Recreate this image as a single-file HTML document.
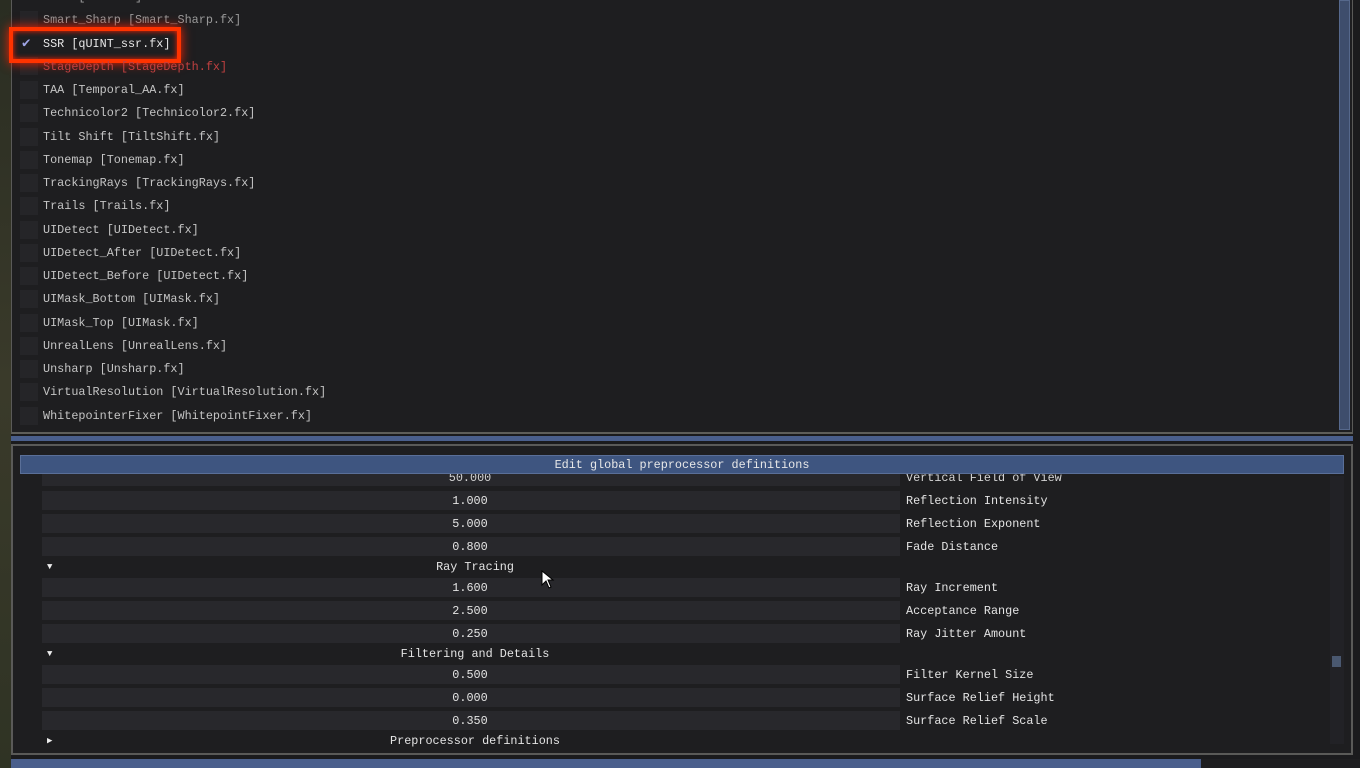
<!DOCTYPE html>
<html><head><meta charset="utf-8"><style>
*{margin:0;padding:0;box-sizing:border-box}
body{width:1360px;height:768px;background:#1b1b1d;position:relative;overflow:hidden;font-family:"Liberation Mono",monospace;font-size:11.8px;color:#d4d4d4}
div{position:absolute}
.t{white-space:pre;line-height:14px}
.cb{left:20px;width:18px;height:18px;background:#252528}
.row{left:42px;width:858px;height:19px;background:#28282c}
.lab{left:906px}
.val{left:300px;width:340px;text-align:center}
</style></head><body>
<div style="left:0;top:0;width:11px;height:768px;background:linear-gradient(#2a2d22,#3a3a2a 50%,#2f3324)"></div>
<div style="left:11px;top:0;width:1342px;height:434px;background:#1e1e20;border-left:1px solid #5a5a58;border-right:1px solid #5a5a58;border-bottom:2px solid #5e5e5a"></div>
<div style="left:1339px;top:0;width:11px;height:430px;background:#3e4d6c;border:1px solid #56688c"></div>
<div style="left:11px;top:436px;width:1342px;height:5px;background:#4a5f8c"></div>
<div class="cb" style="top:11px"></div><div class="t" style="left:43px;top:13px;color:#9a9a9a">Smart_Sharp [Smart_Sharp.fx]</div>
<div class="t" style="left:43px;top:-10px;color:#9a9a9a">Sett [Sett.fx]</div>
<div id="list"></div>
<div style="left:9px;top:27px;width:172px;height:36px;border:4px solid #ff3300;box-shadow:0 0 10px #ff2200,inset 0 0 6px #ff2200"></div>
<div class="t" style="left:22px;top:37px;color:#a0a6e6;font-size:14px">✔</div>
<div class="t" style="left:43px;top:37px;color:#e8e8e8">SSR [qUINT_ssr.fx]</div>
<div class="t" style="left:43px;top:60px;color:#c04040">StageDepth [StageDepth.fx]</div>
<div style="left:11px;top:444px;width:1342px;height:311px;background:#1e1e20;border:2px solid #5a5a58"></div>
<div style="left:1330px;top:476px;width:14px;height:268px;background:#222226"></div>
<div style="left:1332px;top:656px;width:9px;height:11px;background:#4a5870"></div>
<div class="row" style="top:469px;height:17px"></div><div class="t val" style="top:471px">50.000</div><div class="t lab" style="top:471px">Vertical Field of View</div>
<div id="rows"></div>
<div style="left:20px;top:446px;width:1324px;height:9px;background:#1e1e20"></div>
<div style="left:20px;top:455px;width:1324px;height:19px;background:#3e5580;border:1px solid #5a6f98"></div>
<div class="t" style="left:20px;top:458px;width:1324px;text-align:center;color:#e8e8e8">Edit global preprocessor definitions</div>
<div style="left:11px;top:759px;width:1190px;height:9px;background:#4a5f8c"></div>
<div style="left:1201px;top:759px;width:159px;height:9px;background:#1e1e20"></div>
<script>
var items=[["TAA [Temporal_AA.fx]",90],["Technicolor2 [Technicolor2.fx]",113],["Tilt Shift [TiltShift.fx]",137],["Tonemap [Tonemap.fx]",160],["TrackingRays [TrackingRays.fx]",183],["Trails [Trails.fx]",206],["UIDetect [UIDetect.fx]",230],["UIDetect_After [UIDetect.fx]",253],["UIDetect_Before [UIDetect.fx]",276],["UIMask_Bottom [UIMask.fx]",299],["UIMask_Top [UIMask.fx]",323],["UnrealLens [UnrealLens.fx]",346],["Unsharp [Unsharp.fx]",369],["VirtualResolution [VirtualResolution.fx]",392],["WhitepointerFixer [WhitepointFixer.fx]",416]];
var h='<div class="cb" style="top:57px"></div>';
items.forEach(function(i){h+='<div class="cb" style="top:'+(i[1]-9)+'px"></div><div class="t" style="left:43px;top:'+(i[1]-7)+'px;color:#c4c4c4">'+i[0]+'</div>';});
document.getElementById('list').innerHTML=h;
var rows=[["1.000","Reflection Intensity",501],["5.000","Reflection Exponent",524],["0.800","Fade Distance",547],["H","Ray Tracing",567,"▼"],["1.600","Ray Increment",588],["2.500","Acceptance Range",611],["0.250","Ray Jitter Amount",634],["H","Filtering and Details",654,"▼"],["0.500","Filter Kernel Size",675],["0.000","Surface Relief Height",698],["0.350","Surface Relief Scale",721],["H","Preprocessor definitions",741,"▶"]];
h='';
rows.forEach(function(r){
 if(r[0]=="H"){h+='<div class="t" style="left:47px;top:'+(r[2]-7)+'px;font-size:9px;color:#eee">'+r[3]+'</div><div class="t val" style="left:300px;width:350px;top:'+(r[2]-7)+'px;color:#e4e4e4">'+r[1]+'</div>';}
 else{h+='<div class="row" style="top:'+(r[2]-10)+'px"></div><div class="t val" style="top:'+(r[2]-7)+'px;color:#e4e4e4">'+r[0]+'</div><div class="t lab" style="top:'+(r[2]-7)+'px;color:#e4e4e4">'+r[1]+'</div>';}
});
document.getElementById('rows').innerHTML=h;
</script>
<svg style="position:absolute;left:541px;top:570px" width="14" height="20"><path d="M1 1 L1 15 L5 11 L8 18 L10 17 L7 10 L12 10 Z" fill="#fff" stroke="#000" stroke-width="1"/></svg>
</body></html>
